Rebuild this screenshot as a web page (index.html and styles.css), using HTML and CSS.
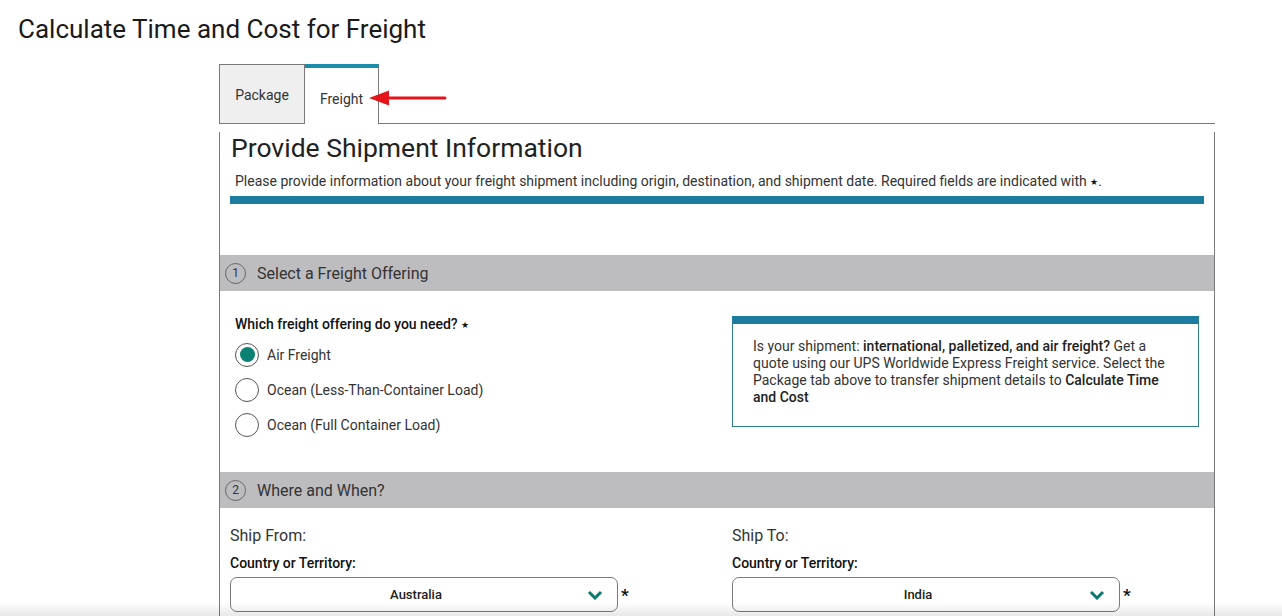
FILE: index.html
```html
<!DOCTYPE html>
<html lang="en">
  <head>
    <meta charset="UTF-8" />
    <title>Calculate Time and Cost for Freight</title>
    <link rel="stylesheet" href="styles.css">
  </head>
  <body>
    <h1>Calculate Time and Cost for Freight</h1>

    <div class="shipper">
      <!-- Tabs -->
      <div class="tabs">
        <div class="tab">Package</div>
        <div class="tab active">Freight</div>
        <div class="tab-fill"></div>
        <svg class="arrow" width="80" height="20" viewBox="0 0 80 20">
          <line x1="18" y1="10" x2="77" y2="10" stroke="#e3151a" stroke-width="3" stroke-linecap="round" />
          <polygon points="1,10 21,2.5 21,17.5" fill="#e3151a" />
        </svg>
      </div>

      <div class="panel">
        <div class="intro">
          <h2>Provide Shipment Information</h2>
          <p>Please provide information about your freight shipment including origin, destination, and shipment date. Required fields are indicated with <span class="star">★</span>.</p>
        </div>
        <div class="bar"></div>

        <!-- 1 Select a Freight Offering -->
        <div class="step-head first"><span class="num">1</span>Select a Freight Offering</div>
        <div class="cols offering">
          <div class="col">
            <div class="question">Which freight offering do you need? <span class="star">★</span></div>
            <label class="radio"><span class="dot checked"></span>Air Freight</label>
            <label class="radio"><span class="dot"></span>Ocean (Less-Than-Container Load)</label>
            <label class="radio"><span class="dot"></span>Ocean (Full Container Load)</label>
          </div>
          <div class="col">
            <div class="note">
              Is your shipment: <b>international, palletized, and air freight?</b> Get a quote using our UPS Worldwide Express Freight service. Select the Package tab above to transfer shipment details to <b>Calculate Time and Cost</b>
            </div>
          </div>
        </div>

        <!-- 2 Where and When -->
        <div class="step-head"><span class="num">2</span>Where and When?</div>
        <div class="cols where">
          <div class="col">
            <div class="ship-label">Ship From:</div>
            <div class="field-label">Country or Territory:</div>
            <div class="select-row">
              <div class="select">Australia
                <svg class="chev" width="16" height="10" viewBox="0 0 16 10"><polyline points="2,2 8,8 14,2" fill="none" stroke="#0b7b70" stroke-width="3" /></svg>
              </div>
              <span class="req">*</span>
            </div>
          </div>
          <div class="col">
            <div class="ship-label">Ship To:</div>
            <div class="field-label">Country or Territory:</div>
            <div class="select-row">
              <div class="select">India
                <svg class="chev" width="16" height="10" viewBox="0 0 16 10"><polyline points="2,2 8,8 14,2" fill="none" stroke="#0b7b70" stroke-width="3" /></svg>
              </div>
              <span class="req">*</span>
            </div>
          </div>
        </div>
      </div>
    </div>

    <div class="fade"></div>
  </body>
</html>
```

FILE: styles.css
```css
html, body {
  height: 100%;
  overflow: hidden;
}

body {
  margin: 0;
  font-family: Roboto, "Liberation Sans", sans-serif;
  color: #333;
  background: #fff;
}

h1 {
  margin: 0;
  padding: 14px 0 0 18px;
  font-size: 26px;
  line-height: 30px;
  font-weight: 400;
  color: #1a1a1a;
}

.shipper {
  margin: 20px 0 0 219px;
  width: 996px;
}

/* Tabs */
.tabs {
  position: relative;
  display: flex;
  height: 60px;
}

.tab {
  box-sizing: border-box;
  height: 60px;
  display: flex;
  align-items: center;
  justify-content: center;
  font-size: 14px;
  color: #333;
}

.tab:first-child {
  width: 86px;
  border: 1px solid #7a7a7a;
  background: #efefef;
  padding-top: 2px;
}

.tab.active {
  width: 74px;
  border-top: 4px solid #1a8eab;
  border-right: 1px solid #7a7a7a;
  background: #fff;
  padding-top: 6px;
}

.tab-fill {
  flex: 1;
  border-bottom: 1px solid #7a7a7a;
}

.arrow {
  position: absolute;
  left: 149px;
  top: 24px;
}

/* Panel */
.panel {
  border: 1px solid #7a7a7a;
  border-top: none;
  padding-bottom: 40px;
}

.intro {
  padding: 0 10px;
}

h2 {
  margin: 8px 0 0 1px;
  font-size: 26.5px;
  line-height: 32px;
  font-weight: 400;
  color: #222;
}

.intro p {
  margin: 7px 0 0 5px;
  font-size: 14px;
  line-height: 20px;
}

.star {
  font-size: 9px;
  color: #111;
  vertical-align: 1px;
}

.bar {
  height: 8px;
  margin: 4px 10px 0;
  background: #1b7ba1;
}

.step-head {
  display: flex;
  align-items: center;
  height: 36px;
  background: #bdbcbf;
  font-size: 16px;
  color: #333;
  padding-left: 5px;
}

.step-head.first {
  margin-top: 51px;
}

.num {
  box-sizing: border-box;
  width: 21px;
  height: 21px;
  border: 1px solid #666;
  border-radius: 50%;
  font-size: 12px;
  display: flex;
  align-items: center;
  justify-content: center;
  margin-right: 11px;
}

.cols {
  display: grid;
  grid-template-columns: 502px 1fr;
  padding-left: 10px;
  align-items: start;
}

.offering {
  padding-top: 23px;
  padding-bottom: 30px;
}

.offering .col:first-child {
  padding-left: 5px;
}

.question {
  font-size: 14px;
  line-height: 20px;
  font-weight: 500;
  color: #111;
  margin-bottom: 2px;
}

.radio {
  display: flex;
  align-items: center;
  height: 35px;
  font-size: 14px;
  color: #333;
}

.dot {
  box-sizing: border-box;
  width: 24px;
  height: 24px;
  border: 1.5px solid #555;
  border-radius: 50%;
  margin-right: 8px;
  display: flex;
  align-items: center;
  justify-content: center;
}

.dot.checked::after {
  content: "";
  width: 15px;
  height: 15px;
  border-radius: 50%;
  background: #0b8174;
}

.note {
  box-sizing: border-box;
  width: 467px;
  margin-top: 2px;
  border: 1px solid #2e7d94;
  border-top: 8px solid #1b7ba1;
  padding: 14px 22px 20px 20px;
  font-size: 14px;
  line-height: 17px;
  color: #333;
}

.note b {
  font-weight: 500;
  color: #222;
}

.where {
  padding-top: 18px;
}

.ship-label {
  font-size: 16px;
  line-height: 20px;
  color: #333;
}

.field-label {
  margin-top: 7px;
  font-size: 14px;
  line-height: 20px;
  font-weight: 500;
  color: #111;
}

.select-row {
  display: flex;
  align-items: center;
  margin-top: 4px;
}

.select {
  position: relative;
  box-sizing: border-box;
  width: 388px;
  height: 35px;
  border: 1px solid #7a7a7a;
  border-radius: 7px;
  display: flex;
  align-items: center;
  justify-content: center;
  padding-right: 16px;
  font-size: 13px;
  font-weight: 500;
  color: #222;
}

.chev {
  position: absolute;
  right: 14px;
  top: 12px;
}

.req {
  margin-left: 3px;
  font-size: 17px;
  font-weight: 700;
  color: #111;
}

.fade {
  position: fixed;
  left: 0;
  right: 0;
  bottom: 0;
  height: 14px;
  background: linear-gradient(rgba(0, 0, 0, 0), rgba(0, 0, 0, 0.09));
  pointer-events: none;
}
```
